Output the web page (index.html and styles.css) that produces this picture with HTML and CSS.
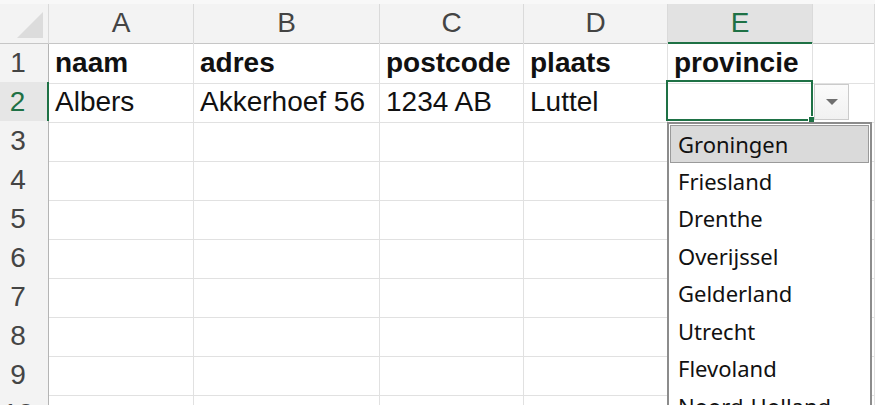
FILE: index.html
```html
<!DOCTYPE html>
<html lang="nl">
  <head>
    <meta charset="utf-8" />
    <link rel="stylesheet" href="styles.css">
  </head>
  <body>
    <div class="sheet">
      <div class="row head">
        <div class="corner"><span class="tri"></span></div>
        <div class="col">A</div>
        <div class="col">B</div>
        <div class="col">C</div>
        <div class="col">D</div>
        <div class="col active">E</div>
        <div class="col"></div>
      </div>
      <div class="row">
        <div class="num">1</div>
        <div class="cell bold">naam</div>
        <div class="cell bold">adres</div>
        <div class="cell bold">postcode</div>
        <div class="cell bold">plaats</div>
        <div class="cell bold">provincie</div>
        <div class="cell"></div>
      </div>
      <div class="row">
        <div class="num active">2</div>
        <div class="cell">Albers</div>
        <div class="cell">Akkerhoef 56</div>
        <div class="cell">1234 AB</div>
        <div class="cell">Luttel</div>
        <div class="cell"></div>
        <div class="cell"></div>
      </div>
      <div class="row"><div class="num">3</div><div class="cell"></div><div class="cell"></div><div class="cell"></div><div class="cell"></div><div class="cell"></div><div class="cell"></div></div>
      <div class="row"><div class="num">4</div><div class="cell"></div><div class="cell"></div><div class="cell"></div><div class="cell"></div><div class="cell"></div><div class="cell"></div></div>
      <div class="row"><div class="num">5</div><div class="cell"></div><div class="cell"></div><div class="cell"></div><div class="cell"></div><div class="cell"></div><div class="cell"></div></div>
      <div class="row"><div class="num">6</div><div class="cell"></div><div class="cell"></div><div class="cell"></div><div class="cell"></div><div class="cell"></div><div class="cell"></div></div>
      <div class="row"><div class="num">7</div><div class="cell"></div><div class="cell"></div><div class="cell"></div><div class="cell"></div><div class="cell"></div><div class="cell"></div></div>
      <div class="row"><div class="num">8</div><div class="cell"></div><div class="cell"></div><div class="cell"></div><div class="cell"></div><div class="cell"></div><div class="cell"></div></div>
      <div class="row"><div class="num">9</div><div class="cell"></div><div class="cell"></div><div class="cell"></div><div class="cell"></div><div class="cell"></div><div class="cell"></div></div>
      <div class="row"><div class="num">10</div><div class="cell"></div><div class="cell"></div><div class="cell"></div><div class="cell"></div><div class="cell"></div><div class="cell"></div></div>

      <!-- selected cell E2 with its validation list -->
      <div class="selection"><span class="handle"></span></div>
      <div class="dropBtn">
        <svg width="12" height="7" viewBox="0 0 12 7"><path d="M0 0h12L6 6z" fill="#6f6f6f"/></svg>
      </div>
      <ul class="list">
        <li class="current">Groningen</li>
        <li>Friesland</li>
        <li>Drenthe</li>
        <li>Overijssel</li>
        <li>Gelderland</li>
        <li>Utrecht</li>
        <li>Flevoland</li>
        <li>Noord-Holland</li>
      </ul>
    </div>
  </body>
</html>
```

FILE: styles.css
```css
body {
  margin: 0;
  background: #ffffff;
  overflow: hidden;
}

.sheet {
  position: relative;
  font-family: "Liberation Sans", Arial, sans-serif;
  font-size: 28px;
  color: #111;
}

.row {
  display: grid;
  grid-template-columns: 49px 145px 186px 144px 144px 145px 1fr;
  height: 39px;
}

.row > div {
  box-sizing: border-box;
  border-right: 1px solid #e1e1e1;
  border-bottom: 1px solid #e1e1e1;
}

/* column letters */
.head {
  height: 43px;
  background: #f3f3f3;
  border-top: 4px solid #f8f8f8;
  box-sizing: border-box;
}
.head > div {
  border-right: 1px solid #dadada;
  border-bottom: 1px solid #c6c6c6;
}
.col {
  text-align: center;
  line-height: 38px;
  color: #444;
}
.col.active {
  background: #e2e2e2;
  color: #1e7145;
  border-bottom: 2px solid #1e7145 !important;
}

.corner {
  position: relative;
}
.tri {
  position: absolute;
  right: 5px;
  bottom: 5px;
  width: 0;
  height: 0;
  border-left: 26px solid transparent;
  border-bottom: 26px solid #dcdcdc;
}

/* row numbers */
.row > .num {
  background: #f3f3f3;
  border-right: 1px solid #b4b4b4;
  border-bottom: 1px solid #dadada;
  line-height: 40px;
  padding-right: 12px;
  text-align: center;
  color: #444;
}
.row > .num.active {
  background: #e6e6e6;
  color: #1e7145;
  border-right: 2px solid #1e7145;
}

.cell {
  line-height: 40px;
  padding-left: 6px;
  white-space: nowrap;
  overflow: hidden;
}
.bold {
  font-weight: bold;
}

.selection {
  position: absolute;
  left: 666px;
  top: 80px;
  width: 147px;
  height: 41px;
  box-sizing: border-box;
  border: 2px solid #1e7145;
}
.handle {
  position: absolute;
  right: -4px;
  bottom: -4px;
  width: 5px;
  height: 5px;
  background: #1e7145;
  border: 1px solid #fff;
}

.dropBtn {
  position: absolute;
  left: 814px;
  top: 84px;
  width: 35px;
  height: 36px;
  box-sizing: border-box;
  border: 1px solid #cbcbcb;
  background: linear-gradient(#fbfbfb, #f1f1f1);
  display: flex;
  align-items: center;
  justify-content: center;
}

.list {
  position: absolute;
  left: 667px;
  top: 122px;
  width: 205px;
  height: 300px;
  margin: 0;
  padding: 1px;
  list-style: none;
  box-sizing: border-box;
  background: #fff;
  border: 2px solid #8c8c8c;
  border-bottom: none;
  font-family: "Noto Sans", "Open Sans", sans-serif;
  font-size: 22px;
  color: #111;
}
.list li {
  height: 37.5px;
  line-height: 37px;
  padding-left: 8px;
  box-sizing: border-box;
}
.list li.current {
  background: #dadada;
  border: 1px solid #9a9a9a;
  padding-left: 7px;
}
```
